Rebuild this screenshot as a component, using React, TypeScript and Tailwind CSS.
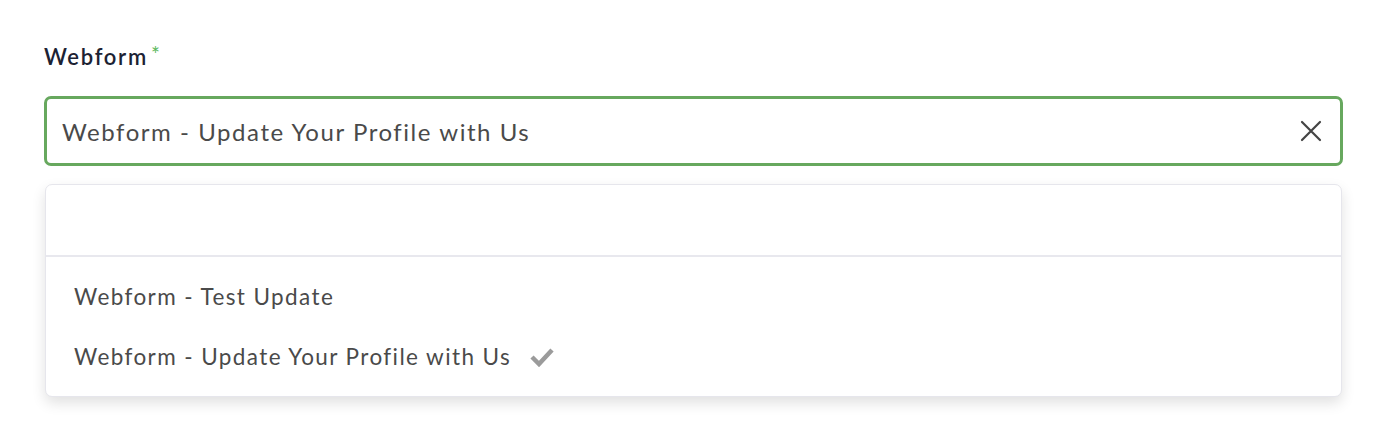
import React from "react";

export default function App() {
  return (
    <div className="w-[1400px] h-[448px] bg-white overflow-hidden" style={{ fontFamily: "Lato, 'Open Sans', sans-serif" }}>
      <div className="pl-[44px] pr-[57px] pt-[41px]">
        <div className="flex items-start h-[31px]">
          <span className="text-[22px] font-semibold tracking-[1.7px] text-[#1c2233] leading-[31px]">Webform</span>
          <span className="text-[21px] text-[#5cb85c] ml-[3px] leading-[26px]">*</span>
        </div>
        <div className="relative mt-[24px]">
          <div className="h-[70px] border-[3px] border-[#67a85e] rounded-[7px] flex items-center pl-[15px] pr-[18px]">
            <span className="flex-1 text-[24px] tracking-[1.55px] text-[#4a4a4a] pt-[1px]">Webform - Update Your Profile with Us</span>
            <svg width="22" height="22" viewBox="0 0 22 22" className="text-[#444]">
              <path d="M2 2 L20 20 M20 2 L2 20" stroke="currentColor" strokeWidth="2.2" strokeLinecap="round" />
            </svg>
          </div>
          <div className="pt-[208px] pl-[2px] h-[260px]">
            <span className="text-[20px] leading-[24px] text-[#3b7dc4]">Create a new webform here</span>
          </div>
          <div className="absolute left-[1px] right-[1px] top-[88px] bg-white border border-[#e6e6ec] rounded-[7px] shadow-[0_6px_14px_rgba(0,0,0,0.12)]">
            <div className="h-[72px] border-b-2 border-[#e8e8ee]" />
            <div className="pt-[10px] pb-[9px]">
              <div className="h-[60px] flex items-center pl-[28px] text-[22.5px] tracking-[1.4px] text-[#4a4a4a]">Webform - Test Update</div>
              <div className="h-[60px] flex items-center pl-[28px] text-[22.5px] tracking-[1.4px] text-[#4a4a4a]">
                <span>Webform - Update Your Profile with Us</span>
                <svg width="26" height="20" viewBox="0 0 26 20" className="ml-[18px]">
                  <path d="M3 10 L10 17 L23 3" stroke="#9b9b9b" strokeWidth="4.5" fill="none" strokeLinejoin="miter" />
                </svg>
              </div>
            </div>
          </div>
        </div>
      </div>
    </div>
  );
}
